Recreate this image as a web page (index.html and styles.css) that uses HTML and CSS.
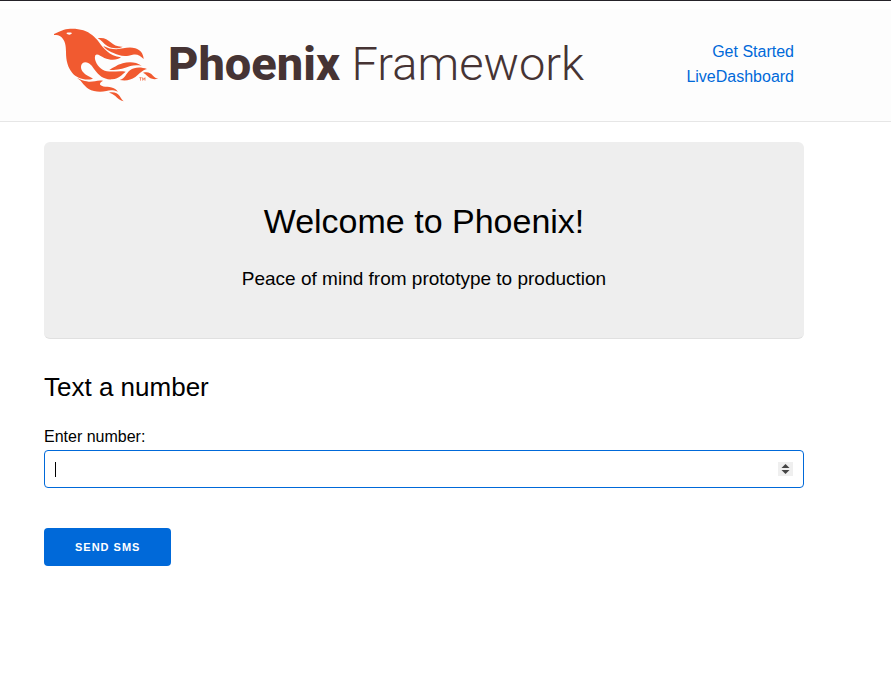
FILE: index.html
```html
<!DOCTYPE html>
<html lang="en">
<head>
<meta charset="utf-8">
<meta name="viewport" content="width=device-width, initial-scale=1">
<title>Phoenix Framework</title>
<link rel="stylesheet" href="styles.css">
</head>
<body>
<header class="site-header">
  <div class="container header-row">
    <a class="logo" href="/">
      <svg class="logo-bird" viewBox="42 36 318 228" aria-hidden="true">
        <path fill-rule="evenodd" d="M42 57 C52 52 62 48 72 44 C88 40 112 40 130 46 C151 53 164 66 176 80 C190 99 207 122 243 127 C233 136 211 137 193 129 C181 123 171 114 166 121 C160 134 174 157 188 164 C207 175 232 166 257 170 C245 179 240 190 216 193 C192 195 177 182 165 166 C156 153 149 142 136 142 C122 143 120 158 127 169 C136 181 147 184 159 191 C137 198 110 190 97 174 C83 157 78 137 78 111 C78 91 75 77 64 66 C58 61 51 60 42 60 Z M79 54 C83 60 92 61 96 54 C91 52 85 52 79 54 Z"/>
        <path d="M173 70 C190 66 202 73 212 82 C222 91 232 96 248 95 C235 102 216 101 202 93 C190 86 184 75 173 70 Z"/>
        <path d="M190 93 C202 99 215 103 229 103 C249 102 265 94 286 100 C302 105 310 117 311 132 C301 121 291 116 278 119 C261 124 249 124 234 119 C216 113 200 107 190 93 Z"/>
        <path d="M208 164 C224 157 231 150 248 145 C266 139 288 140 305 152 C293 150 281 150 271 153 C249 161 233 167 208 164 Z"/>
        <path d="M239 195 C257 190 257 176 270 166 C283 156 302 155 321 162 C306 166 299 176 286 186 C272 196 257 198 239 195 Z"/>
        <path d="M309 173 C324 169 332 174 339 182 C343 187 348 190 355 190 C340 196 329 190 323 184 C318 179 315 176 309 173 Z"/>
        <path d="M106 187 C119 192 129 199 146 200 C162 201 172 194 189 197 C180 202 176 208 185 212 C198 219 218 209 234 230 C220 225 210 225 199 228 C181 232 160 230 146 222 C128 211 124 193 106 187 Z"/>
        <path d="M207 233 C223 230 233 235 239 243 C243 249 245 254 251 259 C240 256 233 250 226 243 C220 238 214 235 207 233 Z"/>
        <path class="logo-mark" d="M298 188h7 M301.500 188v9 M308 197v-9l3.500 6 3.500-6v9"/>
      </svg>
      <span class="logo-name"><strong>Phoenix</strong> Framework</span>
    </a>
    <nav class="site-nav">
      <a href="#get-started">Get Started</a>
      <a href="#dashboard">LiveDashboard</a>
    </nav>
  </div>
</header>
<main class="container">
  <section class="hero">
    <h1>Welcome to Phoenix!</h1>
    <p>Peace of mind from prototype to production</p>
  </section>
  <h2>Text a number</h2>
  <form class="sms-form">
    <label for="number">Enter number:</label>
    <div class="number-field">
      <input id="number" type="number">
      <span class="caret"></span>
      <svg class="stepper" viewBox="0 0 15 14" aria-hidden="true">
        <path d="M3.500 6 7.500 2 11.500 6Z M3.500 8 7.500 12 11.500 8Z"/>
      </svg>
    </div>
    <button type="submit">Send SMS</button>
  </form>
</main>
</body>
</html>
```

FILE: styles.css
```css
* {
  box-sizing: border-box;
}

body {
  margin: 0;
  background: #fff;
  color: #000;
  font-family: "Liberation Sans", Helvetica, Arial, sans-serif;
  font-size: 16px;
  font-weight: 300;
  line-height: 24px;
}

a {
  color: #0069d9;
  text-decoration: none;
}

.container {
  max-width: 891px;
  padding: 0 87px 0 44px;
}

.site-header {
  padding: 26px 0 18px;
  border-top: 1px solid #252329;
  border-bottom: 1px solid #e6e6e6;
  background: linear-gradient(#fff 8px, #fdfdfd 8px);
}

.header-row {
  display: flex;
  align-items: center;
  justify-content: space-between;
}

.logo {
  display: flex;
  align-items: center;
  gap: 8px;
  margin-left: 10px;
  color: #463434;
}

.logo-bird {
  width: 106px;
  height: 76px;
  fill: #f15a30;
}

.logo-mark {
  fill: none;
  stroke: #f15a30;
  stroke-width: 2;
}

.logo-name {
  padding-bottom: 2px;
  font-family: Roboto, sans-serif;
  font-size: 47px;
  line-height: 56px;
  white-space: nowrap;
}

.logo-name strong {
  font-weight: 800;
}

.site-nav {
  display: flex;
  flex-direction: column;
  margin-right: 10px;
  padding-bottom: 2px;
  line-height: 25px;
  text-align: right;
}

.hero {
  margin-top: 20px;
  padding: 57px 20px 43px;
  border-bottom: 1px solid #e0e0e0;
  border-radius: 6px;
  background: #eee;
  text-align: center;
}

h1,
h2,
p {
  margin: 0;
  font-weight: 300;
}

h1 {
  margin-bottom: 20px;
  font-size: 34px;
  line-height: 44px;
}

.hero p {
  font-size: 19px;
  line-height: 32px;
}

h2 {
  margin: 30px 0 20px;
  font-size: 26px;
  line-height: 36px;
}

.sms-form {
  display: flex;
  flex-direction: column;
  align-items: flex-start;
}

.number-field {
  position: relative;
  width: 100%;
  margin: 1px 0 40px;
}

.number-field input {
  display: block;
  width: 100%;
  height: 38px;
  padding: 6px 30px 6px 10px;
  border: 1px solid #0069d9;
  border-radius: 4px;
  outline: none;
  background: #fff;
  font: inherit;
}

.number-field input::-webkit-inner-spin-button {
  display: none;
}

.caret {
  position: absolute;
  top: 12px;
  left: 11px;
  width: 1px;
  height: 15px;
  background: #000;
}

.stepper {
  position: absolute;
  top: 12px;
  right: 11px;
  width: 15px;
  height: 14px;
  background: #efefef;
  fill: #444;
  pointer-events: none;
}

.sms-form button {
  height: 38px;
  padding: 0 31px;
  border: 0;
  border-radius: 4px;
  background: #0069d9;
  color: #fff;
  font-family: inherit;
  font-size: 11px;
  font-weight: 700;
  letter-spacing: 1px;
  text-transform: uppercase;
}
```
